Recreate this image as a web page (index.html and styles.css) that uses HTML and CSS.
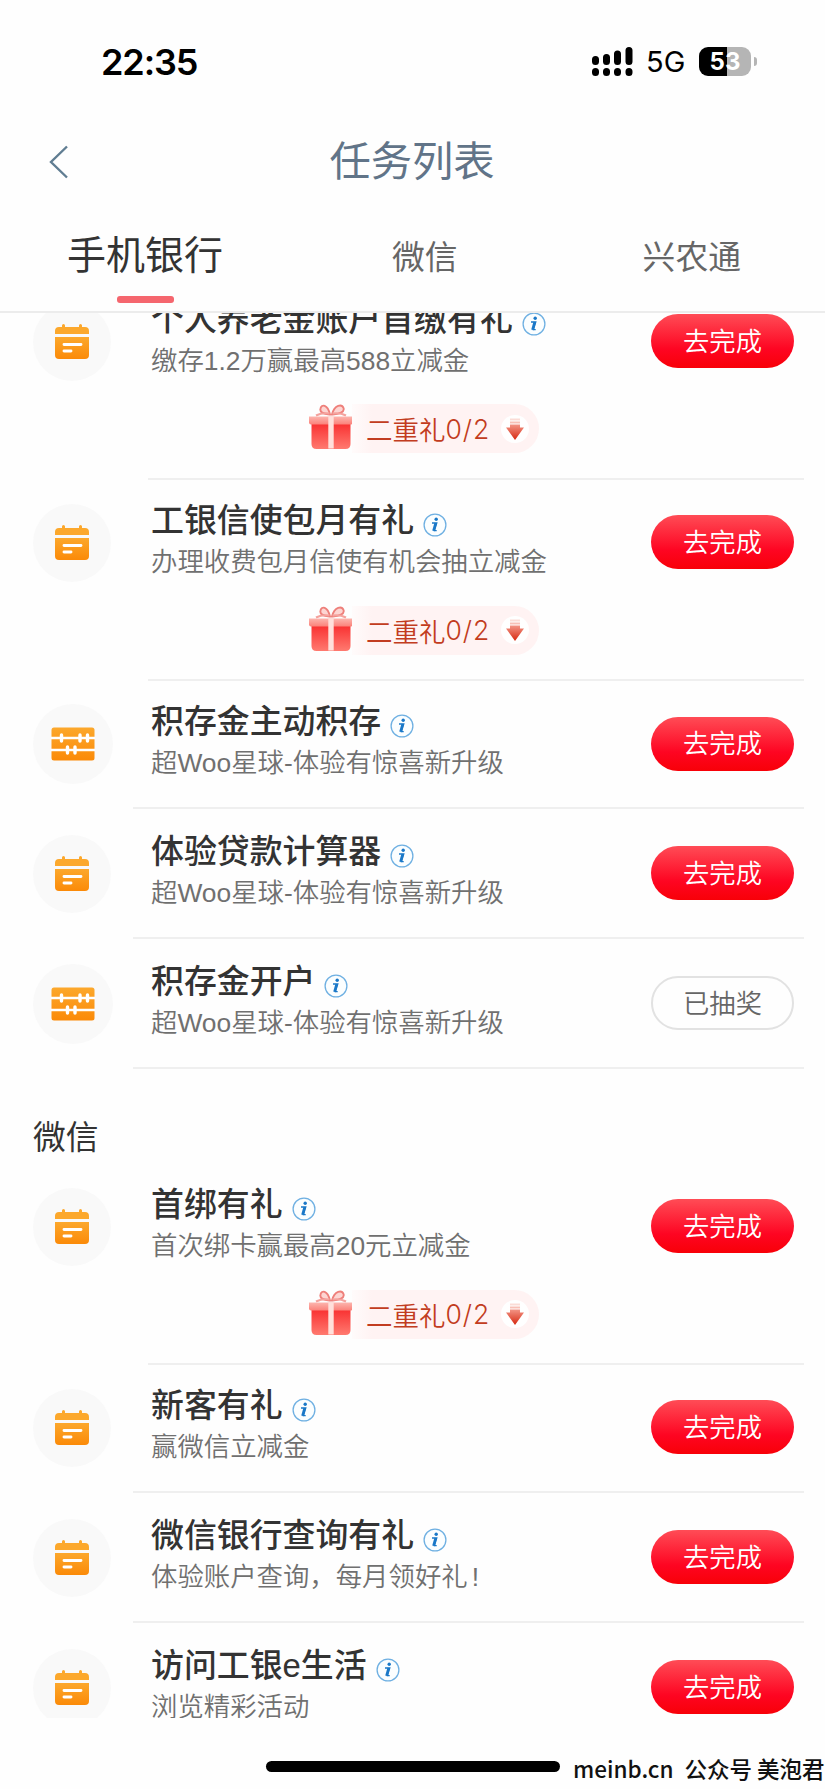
FILE: index.html
```html
<!DOCTYPE html>
<html lang="zh-CN">
<head>
    <meta charset="UTF-8">
    <meta name="viewport" content="width=device-width, initial-scale=1.0">
    <title>任务列表</title>
    <link rel="stylesheet" href="styles.css">
</head>
<body>
    <!-- 图标定义 -->
    <svg class="defs" width="0" height="0">
        <defs>
            <linearGradient id="orange" x1="0" y1="0" x2="0" y2="1">
                <stop offset="0" stop-color="#fca82c"/>
                <stop offset="1" stop-color="#fb8a08"/>
            </linearGradient>
            <linearGradient id="box" x1="0" y1="0" x2="0" y2="1">
                <stop offset="0" stop-color="#f93232"/>
                <stop offset="1" stop-color="#ff7a70"/>
            </linearGradient>
            <linearGradient id="lid" x1="0" y1="0" x2="0" y2="1">
                <stop offset="0" stop-color="#fcb5ae"/>
                <stop offset="1" stop-color="#fb8179"/>
            </linearGradient>
            <linearGradient id="arrow" x1="0" y1="0" x2="0" y2="1">
                <stop offset="0" stop-color="#f39485"/>
                <stop offset="1" stop-color="#d62810"/>
            </linearGradient>
        </defs>
        <symbol id="calendar" viewBox="0 0 36 36">
            <path d="M1 10V7q0-4 4-4h3V1.500q0-1.500 1.500-1.500T11 1.500V3h14V1.500q0-1.500 1.500-1.500T28 1.500V3h3q4 0 4 4v3z" fill="#fca82c"/>
            <path d="M1 13h34v18q0 4-4 4H5q-4 0-4-4z" fill="url(#orange)"/>
            <path d="M10 20.500h17M10 27h7" stroke="#fff" stroke-width="2.900" stroke-linecap="round"/>
        </symbol>
        <symbol id="abacus" viewBox="0 0 44 34">
            <rect x=".5" y=".5" width="43" height="33" rx="2.500" fill="url(#orange)"/>
            <path d="M0 11h44M0 23h44" stroke="#fff" stroke-width="2.600"/>
            <path d="M10.500 8v6M29 8v6M36.500 8v6M16.500 20v6M24 20v6" stroke="#fff" stroke-width="3.400" stroke-linecap="round"/>
        </symbol>
        <symbol id="info" viewBox="0 0 24 24">
            <circle cx="12" cy="12" r="10.900" fill="#fbfeff" stroke="#6fb0e2" stroke-width="1.300"/>
            <circle cx="13.200" cy="6.200" r="1.700" fill="#1a78c8"/>
            <path d="M9 10h4.800l-2.300 7.600h2.200" fill="none" stroke="#1a78c8" stroke-width="1.300"/>
            <path d="M12.700 10l-2.200 7.800" stroke="#1a78c8" stroke-width="2.600"/>
        </symbol>
        <symbol id="gift" viewBox="0 0 46 46">
            <path d="M21.500 10.500C15 10 11.500 8 12.500 4.500C13.500 0 19.500 0 22 10.500zM24.500 10.500C31 10 37 8 35.500 4C34 0 26.500 0 24 10.500z" fill="#fdd5d2" stroke="#ee7f7a" stroke-width="1.900"/>
            <path d="M21.500 9.500Q14 8.500 8 11.500M24.500 9.500Q32 8.500 38 11.500" fill="none" stroke="#f4a29d" stroke-width="2.200"/>
            <path d="M3.500 20h39v20q0 5-5 5h-29q-5 0-5-5z" fill="url(#box)"/>
            <path d="M1 12.500h44v6q0 2-2 2H3q-2 0-2-2z" fill="url(#lid)"/>
            <rect x="20.300" y="12.500" width="5.400" height="32" fill="#ffe0db"/>
        </symbol>
        <symbol id="down" viewBox="0 0 28 28">
            <circle cx="14" cy="14" r="14" fill="#fff"/>
            <path d="M9 4.500h10" stroke="#fbdcd6" stroke-width="2"/>
            <path d="M9 7.500h10" stroke="#f8c0b6" stroke-width="2"/>
            <path d="M9 9.500h10v3h4L14 25 5 12.500h4z" fill="url(#arrow)"/>
        </symbol>
    </svg>

    <div class="status">
        <span class="time">22:35</span>
        <svg class="signal" width="41" height="29" viewBox="0 0 41 29">
            <path d="M3.500 12.500v2M14.500 10.500v4M25.500 7v7.500M37 3.500v11M3.500 24.500v1M14.500 24.500v1M25.500 24.500v1M37 24.500v1" stroke="#000" stroke-width="7" stroke-linecap="round"/>
        </svg>
        <span class="net">5G</span>
        <span class="battery">53</span>
        <span class="battery-tip"></span>
    </div>

    <header class="nav">
        <svg class="back" width="20" height="34" viewBox="0 0 20 34">
            <path d="M18 1.500L2 17l16 15.500" fill="none" stroke="#607d92" stroke-width="2.400"/>
        </svg>
        <h1>任务列表</h1>
    </header>

    <nav class="tabs">
        <a class="tab active">手机银行</a>
        <a class="tab">微信</a>
        <a class="tab">兴农通</a>
    </nav>

    <main class="list">
        <section class="task has-bonus first">
            <div class="main">
                <div class="icon"><svg width="36" height="36"><use href="#calendar"/></svg></div>
                <div class="text">
                    <h2>个人养老金账户首缴有礼<svg class="info"><use href="#info"/></svg></h2>
                    <p>缴存1.2万赢最高588立减金</p>
                </div>
                <button class="btn">去完成</button>
            </div>
            <div class="bonus">
                <svg class="gift"><use href="#gift"/></svg>
                <div class="pill">二重礼<b>0/2</b><svg class="down"><use href="#down"/></svg></div>
            </div>
        </section>
        <section class="task has-bonus">
            <div class="main">
                <div class="icon"><svg width="36" height="36"><use href="#calendar"/></svg></div>
                <div class="text">
                    <h2>工银信使包月有礼<svg class="info"><use href="#info"/></svg></h2>
                    <p>办理收费包月信使有机会抽立减金</p>
                </div>
                <button class="btn">去完成</button>
            </div>
            <div class="bonus">
                <svg class="gift"><use href="#gift"/></svg>
                <div class="pill">二重礼<b>0/2</b><svg class="down"><use href="#down"/></svg></div>
            </div>
        </section>
        <section class="task">
            <div class="main">
                <div class="icon wide"><svg width="44" height="34"><use href="#abacus"/></svg></div>
                <div class="text">
                    <h2>积存金主动积存<svg class="info"><use href="#info"/></svg></h2>
                    <p>超Woo星球-体验有惊喜新升级</p>
                </div>
                <button class="btn">去完成</button>
            </div>
        </section>
        <section class="task">
            <div class="main">
                <div class="icon"><svg width="36" height="36"><use href="#calendar"/></svg></div>
                <div class="text">
                    <h2>体验贷款计算器<svg class="info"><use href="#info"/></svg></h2>
                    <p>超Woo星球-体验有惊喜新升级</p>
                </div>
                <button class="btn">去完成</button>
            </div>
        </section>
        <section class="task">
            <div class="main">
                <div class="icon wide"><svg width="44" height="34"><use href="#abacus"/></svg></div>
                <div class="text">
                    <h2>积存金开户<svg class="info"><use href="#info"/></svg></h2>
                    <p>超Woo星球-体验有惊喜新升级</p>
                </div>
                <button class="btn done">已抽奖</button>
            </div>
        </section>

        <h3 class="group">微信</h3>

        <section class="task has-bonus">
            <div class="main">
                <div class="icon"><svg width="36" height="36"><use href="#calendar"/></svg></div>
                <div class="text">
                    <h2>首绑有礼<svg class="info"><use href="#info"/></svg></h2>
                    <p>首次绑卡赢最高20元立减金</p>
                </div>
                <button class="btn">去完成</button>
            </div>
            <div class="bonus">
                <svg class="gift"><use href="#gift"/></svg>
                <div class="pill">二重礼<b>0/2</b><svg class="down"><use href="#down"/></svg></div>
            </div>
        </section>
        <section class="task">
            <div class="main">
                <div class="icon"><svg width="36" height="36"><use href="#calendar"/></svg></div>
                <div class="text">
                    <h2>新客有礼<svg class="info"><use href="#info"/></svg></h2>
                    <p>赢微信立减金</p>
                </div>
                <button class="btn">去完成</button>
            </div>
        </section>
        <section class="task">
            <div class="main">
                <div class="icon"><svg width="36" height="36"><use href="#calendar"/></svg></div>
                <div class="text">
                    <h2>微信银行查询有礼<svg class="info"><use href="#info"/></svg></h2>
                    <p>体验账户查询，每月领好礼<span class="mark">!</span></p>
                </div>
                <button class="btn">去完成</button>
            </div>
        </section>
        <section class="task">
            <div class="main">
                <div class="icon"><svg width="36" height="36"><use href="#calendar"/></svg></div>
                <div class="text">
                    <h2>访问工银e生活<svg class="info"><use href="#info"/></svg></h2>
                    <p>浏览精彩活动</p>
                </div>
                <button class="btn">去完成</button>
            </div>
        </section>
    </main>

    <footer class="bottom">
        <div class="home-bar"></div>
        <div class="credit"><span>meinb.cn</span><span>公众号 美泡君</span></div>
    </footer>
</body>
</html>
```

FILE: styles.css
```css
*{
    box-sizing: border-box;
}
body{
    width: 825px;
    height: 1789px;
    margin: 0;
    overflow: hidden;
    background: #fefefe;
    color: #333;
    font-family: "Liberation Sans", "Noto Sans CJK SC", sans-serif;
}
h1, h2, h3, p{
    margin: 0;
    font-weight: normal;
    white-space: nowrap;
}
svg{
    display: block;
    flex: none;
}
.defs{
    position: absolute;
}

/* 状态栏 */
.status{
    display: flex;
    align-items: center;
    height: 123px;
    padding-left: 101px;
    color: #000;
    font-family: Inter, sans-serif;
}
.time{
    width: 491px;
    font-size: 36px;
    font-weight: 600;
    letter-spacing: -1.1px;
}
.net{
    width: 52px;
    margin-left: 13px;
    font-size: 29px;
}
.battery{
    width: 52px;
    height: 29px;
    margin-left: 1px;
    border-radius: 9px;
    background: linear-gradient(to right, #000 28px, #b5b5b5 28px);
    color: #fff;
    font-size: 24px;
    font-weight: 700;
    line-height: 29px;
    text-align: center;
}
.battery-tip{
    width: 3px;
    height: 9px;
    margin-left: 3px;
    border-radius: 0 4px 4px 0;
    background: #b5b5b5;
}

/* 标题 */
.nav{
    display: flex;
    align-items: center;
    height: 78px;
    padding-left: 49px;
}
.nav h1{
    width: 727px;
    padding-right: 41px;
    color: #617488;
    font-size: 41.3px;
    line-height: 60px;
    text-align: center;
}

/* 标签 */
.tabs{
    display: flex;
    justify-content: space-between;
    height: 112px;
    padding: 0 84px 0 67px;
    border-bottom: 2px solid #ececec;
}
.tab{
    padding-top: 26px;
    color: #666;
    font-size: 32.8px;
    line-height: 62px;
}
.tab:nth-child(2){
    margin-right: 16px;
}
.active{
    padding-top: 24px;
    color: #333;
    font-size: 39px;
}
.active::after{
    content: "";
    display: block;
    width: 57px;
    height: 7px;
    margin: 9px auto 0;
    border-radius: 3px;
    background: #f5666e;
}

/* 任务列表 */
.list{
    height: 1405px;
    overflow: hidden;
}
.task{
    height: 129.9px;
}
.has-bonus{
    height: 201.3px;
}
.first{
    margin-top: -37.5px;
}
.main{
    display: flex;
    align-items: flex-start;
    height: 128.9px;
    padding-left: 33px;
}
.icon{
    display: flex;
    align-items: center;
    justify-content: center;
    width: 78px;
    height: 78px;
    margin: 27px 40px 0 0;
    border-radius: 50%;
    background: #f9f9f9;
}
.icon.wide{
    width: 80px;
    height: 80px;
    margin: 26px 38px 0 0;
}
.text{
    width: 500px;
    padding-top: 21.3px;
}
.text h2{
    display: flex;
    align-items: center;
    height: 45px;
    font-size: 32.9px;
    font-weight: 500;
    line-height: 45px;
}
.info{
    width: 24px;
    height: 24px;
    margin: 9px 0 0 9px;
}
.text p{
    color: #707070;
    font-size: 26.4px;
    font-weight: 350;
    line-height: 38px;
}
.mark{
    padding-left: 4px;
}
.btn{
    width: 143px;
    height: 54px;
    margin-top: 38.5px;
    padding: 0 0 4px;
    border: 0;
    border-radius: 27px;
    background: linear-gradient(#ff4c56, #fe0522 65%, #f80008);
    color: #fff;
    font-family: inherit;
    font-size: 26.3px;
    font-weight: 350;
}
.done{
    border: 2px solid #e2e2e2;
    background: none;
    color: #666;
}
/* 分割线 */
.task::after{
    content: "";
    display: block;
    height: 2px;
    margin: 0 21px 0 133px;
    background: #efefef;
}
.has-bonus::after{
    margin: 25.5px 21px 0 148px;
}
.bonus{
    display: flex;
    height: 48px;
    padding-left: 308px;
}
.gift{
    width: 46px;
    height: 46px;
}
.pill{
    display: flex;
    align-items: center;
    width: 187px;
    height: 49px;
    margin-left: -2px;
    padding-left: 14px;
    border-radius: 0 25px 25px 0;
    background: linear-gradient(to right, #fffbfb, #fff3f3 20px);
    color: #c23c20;
    font-size: 26.5px;
    font-weight: 350;
}
.pill b{
    font-family: Inter, sans-serif;
    font-weight: 350;
    letter-spacing: 1px;
}
.down{
    width: 28px;
    height: 28px;
    margin: 0 10px 0 auto;
}
.group{
    height: 92.9px;
    padding: 46px 0 0 33px;
    font-size: 32.8px;
    line-height: 48px;
}

/* 底部 */
.bottom{
    display: flex;
    align-items: center;
    height: 71px;
    padding: 28px 0 0 266px;
}
.home-bar{
    width: 294px;
    height: 11px;
    margin-top: -2px;
    border-radius: 6px;
    background: #000;
}
.credit{
    display: flex;
    gap: 11px;
    margin: 1px 0 0 13px;
    color: #111;
    font-family: "Noto Sans CJK SC", sans-serif;
    font-size: 22.5px;
    font-weight: 500;
    line-height: 30px;
    white-space: nowrap;
}
```
